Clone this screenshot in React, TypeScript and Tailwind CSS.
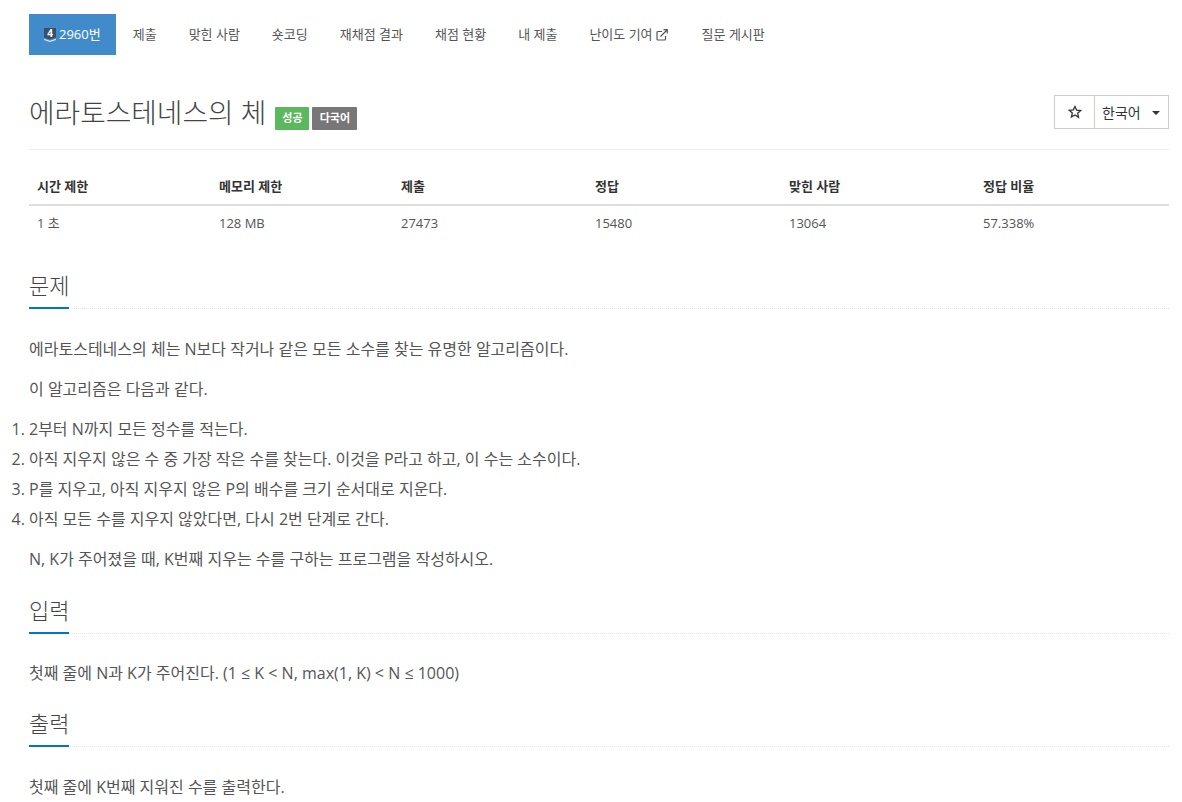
const NAV = ["제출", "맞힌 사람", "숏코딩", "재채점 결과", "채점 현황", "내 제출"];

function Heading({ children, className = "" }: { children: string; className?: string }) {
  return (
    <div className={`border-b border-dotted border-[#e5e5e5] ${className}`}>
      <h2 className="inline-block h-[46px] border-b-2 border-[#0076c0] text-[22px] leading-[44px] font-light text-[#444] -mb-px">
        {children}
      </h2>
    </div>
  );
}

export default function App() {
  return (
    <div className="h-[802px] overflow-hidden bg-white pl-[29px] pr-[13px] pt-[14px] text-[#555] font-['Open_Sans','Noto_Sans_CJK_KR',sans-serif]">
      <nav className="flex h-[41px] text-[13px] gap-[2px]">
        <a className="flex items-center gap-[3px] bg-[#428bca] px-[15px] text-white">
          <svg width="12" height="16" viewBox="0 0 12 16">
            <path d="M0 1h12v9.5L6 12.5 0 10.5z" fill="#3a4f66" />
            <path d="M0 11.8l6 2 6-2v1.2l-6 2-6-2z" fill="#dfe8f0" />
            <text x="6" y="9.5" textAnchor="middle" fontSize="10" fontWeight="700" fill="#fff">4</text>
          </svg>
          2960번
        </a>
        {NAV.map((n) => (
          <a key={n} className="flex items-center px-[15px]">{n}</a>
        ))}
        <a className="flex items-center gap-[3px] px-[15px]">
          난이도 기여
          <svg width="14" height="12" viewBox="0 0 14 12" fill="none" stroke="#555" strokeWidth="1.2">
            <path d="M9.5 7v3a1 1 0 0 1-1 1H2a1 1 0 0 1-1-1V3.5a1 1 0 0 1 1-1h4" />
            <path d="M4.5 7.5 11 1M7.5 .7h3.8v3.8" />
          </svg>
        </a>
        <a className="flex items-center px-[15px]">질문 게시판</a>
      </nav>

      <header className="mt-[26px] flex h-[69px] items-start justify-between border-b border-[#eee]">
        <div className="mt-[11px] flex items-center">
          <h1 className="text-[27.8px] font-light leading-[40px] text-[#444]">에라토스테네스의 체</h1>
          <span className="ml-[9px] mt-[13px] flex h-[23px] w-[34px] items-center justify-center rounded-[1px] bg-[#5cb85c] text-[11px] font-bold text-white">성공</span>
          <span className="ml-[3px] mt-[13px] flex h-[23px] w-[45px] items-center justify-center rounded-[1px] bg-[#777] text-[11px] font-bold text-white">다국어</span>
        </div>
        <div className="mt-[14px] flex h-[34px] border border-[#ccc] text-[14px] text-[#333]">
          <div className="flex w-[40px] items-center justify-center border-r border-[#ccc]">
            <svg width="14" height="14" viewBox="0 0 24 24" fill="none" stroke="#333" strokeWidth="2.2" strokeLinejoin="miter">
              <path d="M12 2.5l2.9 6.4 6.9.7-5.2 4.6 1.5 6.9L12 17.1l-6.1 3.5 1.5-6.9-5.2-4.6 6.9-.7z" />
            </svg>
          </div>
          <div className="flex w-[73px] items-center pl-[7px]">
            한국어
            <span className="ml-[11px] mt-[1px] h-0 w-0 border-x-4 border-t-4 border-x-transparent border-t-[#333]" />
          </div>
        </div>
      </header>

      <table className="mt-[16px] w-full table-fixed text-[13px] text-[#333]">
        <thead>
          <tr className="h-[39px] border-b-2 border-[#ddd] text-left">
            <th className="w-[182px] px-2 pt-[4px] font-semibold">시간 제한</th>
            <th className="w-[182px] px-2 pt-[4px] font-semibold">메모리 제한</th>
            <th className="w-[194px] px-2 pt-[4px] font-semibold">제출</th>
            <th className="w-[194px] px-2 pt-[4px] font-semibold">정답</th>
            <th className="w-[194px] px-2 pt-[4px] font-semibold">맞힌 사람</th>
            <th className="px-2 pt-[4px] font-semibold">정답 비율</th>
          </tr>
        </thead>
        <tbody>
          <tr className="h-[36px] text-[#555]">
            <td className="px-2">1 초</td>
            <td className="px-2">128 MB</td>
            <td className="px-2">27473</td>
            <td className="px-2">15480</td>
            <td className="px-2">13064</td>
            <td className="px-2">57.338%</td>
          </tr>
        </tbody>
      </table>

      <Heading className="mt-[22px]">문제</Heading>
      <section className="mt-[25px] text-[16px] leading-[30px]">
        <p>에라토스테네스의 체는 N보다 작거나 같은 모든 소수를 찾는 유명한 알고리즘이다.</p>
        <p className="mt-[10px]">이 알고리즘은 다음과 같다.</p>
        <ol className="mt-[10px] list-decimal">
          <li>2부터 N까지 모든 정수를 적는다.</li>
          <li>아직 지우지 않은 수 중 가장 작은 수를 찾는다. 이것을 P라고 하고, 이 수는 소수이다.</li>
          <li>P를 지우고, 아직 지우지 않은 P의 배수를 크기 순서대로 지운다.</li>
          <li>아직 모든 수를 지우지 않았다면, 다시 2번 단계로 간다.</li>
        </ol>
        <p className="mt-[10px]">N, K가 주어졌을 때, K번째 지우는 수를 구하는 프로그램을 작성하시오.</p>
      </section>

      <Heading className="mt-[14px]">입력</Heading>
      <p className="mt-[24px] text-[16px] leading-[30px]">첫째 줄에 N과 K가 주어진다. (1 ≤ K &lt; N, max(1, K) &lt; N ≤ 1000)</p>

      <Heading className="mt-[13px]">출력</Heading>
      <p className="mt-[25px] text-[16px] leading-[30px]">첫째 줄에 K번째 지워진 수를 출력한다.</p>
    </div>
  );
}
